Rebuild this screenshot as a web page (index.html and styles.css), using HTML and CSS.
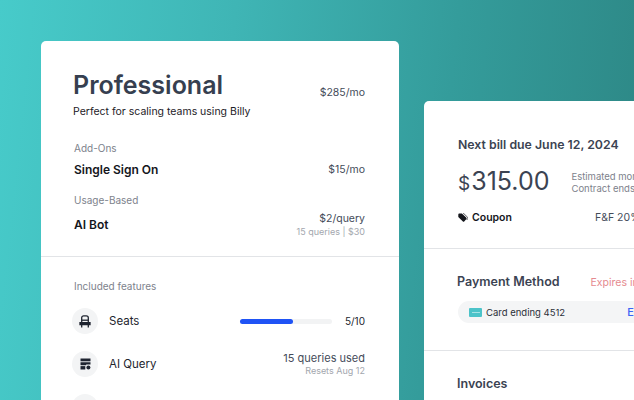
FILE: index.html
```html
<!DOCTYPE html>
<html lang="en">
<head>
  <meta charset="UTF-8">
  <meta name="viewport" content="width=device-width, initial-scale=1.0">
  <title>Billing</title>
  <link rel="stylesheet" href="styles.css">
</head>
<body>
  <div class="stage">
    <div class="card plan-card">
      <div class="plan-top">
        <div class="plan-head">
          <div>
            <h1>Professional</h1>
            <p class="tagline">Perfect for scaling teams using Billy</p>
          </div>
          <span class="price plan-price">$285/mo</span>
        </div>
        <p class="label addons-label">Add-Ons</p>
        <div class="line-row">
          <span class="item-name">Single Sign On</span>
          <span class="price">$15/mo</span>
        </div>
        <p class="label usage-label">Usage-Based</p>
        <div class="line-row usage-row">
          <span class="item-name">AI Bot</span>
          <div class="right-col">
            <span class="price">$2/query</span>
            <span class="small-note">15 queries | $30</span>
          </div>
        </div>
      </div>
      <div class="plan-features">
        <p class="label">Included features</p>
        <div class="feature">
          <span class="feature-icon">
            <svg width="12" height="13" viewBox="0 0 12 13" fill="none" stroke="#1f2430" stroke-width="1.3">
              <path d="M2.7 7V2.8A2 2 0 0 1 4.7.8h2.6a2 2 0 0 1 2 2V7"/>
              <path d="M2.7 5.2h6.6"/>
              <path d="M1 7.6h10v2H1z" fill="#1f2430"/>
              <path d="M2.7 9.6v3M9.3 9.6v3"/>
            </svg>
          </span>
          <span class="feature-name">Seats</span>
          <div class="seats-usage">
            <div class="bar"><div class="bar-fill" style="width: 58%"></div></div>
            <span class="seats-count">5/10</span>
          </div>
        </div>
        <div class="feature">
          <span class="feature-icon">
            <svg width="11" height="12" viewBox="0 0 11 12" fill="#1f2430">
              <path d="M.5.5h10v2.8H.5z"/>
              <path d="M.5 4.3h10v2.2H6.2v.7H.5z"/>
              <path d="M.5 8.1h4.8v3.4H.5z"/>
              <circle cx="8.4" cy="9.4" r="2"/>
            </svg>
          </span>
          <span class="feature-name">AI Query</span>
          <div class="right-col">
            <span class="price query-used">15 queries used</span>
            <span class="small-note">Resets Aug 12</span>
          </div>
        </div>
        <div class="feature">
          <span class="feature-icon"></span>
        </div>
      </div>
    </div>

    <div class="card bill-card">
      <div class="bill-section">
        <h2 class="next-bill">Next bill due June 12, 2024</h2>
        <div class="amount-row">
          <div class="amount"><span class="currency">$</span>315.00</div>
          <div class="amount-notes">
            <span>Estimated monthly total</span>
            <span>Contract ends Sep 12, 2025</span>
          </div>
        </div>
        <div class="coupon-row">
          <span class="coupon">
            <svg width="10" height="10" viewBox="0 0 10 10" fill="#14161c">
              <path d="M.3 1.4A.9.9 0 0 1 1.2.6h2.7l4.5 4.2a.9.9 0 0 1 0 1.3L6.2 8.4a.9.9 0 0 1-1.3 0L.3 3.9z"/>
              <path d="M5 .6h.8l3.9 3.8a1 1 0 0 1 0 1.4L8.6 7" fill="none" stroke="#14161c" stroke-width=".7"/>
            </svg>
            Coupon
          </span>
          <span class="coupon-code">F&amp;F 20% off</span>
        </div>
      </div>
      <div class="bill-section payment">
        <div class="payment-head">
          <h2>Payment Method</h2>
          <span class="expires">Expires in 30 days</span>
        </div>
        <div class="card-pill">
          <span class="card-chip"><span class="chip-text"></span></span>
          <span class="card-name">Card ending 4512</span>
          <span class="edit-link">Edit</span>
        </div>
      </div>
      <div class="bill-section invoices">
        <h2>Invoices</h2>
      </div>
    </div>
  </div>
</body>
</html>
```

FILE: styles.css
```css
* {
  box-sizing: border-box;
}
html, body {
  margin: 0;
  height: 400px;
  overflow: hidden;
}
body {
  font-family: Inter, "Liberation Sans", sans-serif;
  background: linear-gradient(96deg, #47cbca 0%, #3fb5b5 35%, #349c9b 68%, #2d8785 100%);
  color: #14161c;
}
h1, h2, p {
  margin: 0;
}
.stage {
  display: flex;
  align-items: flex-start;
  gap: 25px;
  width: 800px;
  padding: 41px 0 0 41px;
}
.card {
  background: #fff;
  border-radius: 5px;
  flex: none;
}
.plan-card {
  width: 358px;
  height: 420px;
}
.plan-top {
  padding: 29px 34px 0 32px;
  height: 216px;
  border-bottom: 1px solid #e2e4e7;
}
.plan-head {
  display: flex;
  justify-content: space-between;
  align-items: flex-start;
}
h1 {
  font-size: 25px;
  line-height: 30px;
  font-weight: 600;
  color: #363f50;
}
.tagline {
  font-size: 10.5px;
  line-height: 14px;
  margin-top: 5px;
  color: #1d2027;
}
.price {
  font-size: 10.5px;
  line-height: 14px;
  color: #444b59;
}
.plan-price {
  margin-top: 16px;
}
.label {
  font-size: 10px;
  line-height: 14px;
  color: #7d828c;
  padding-left: 1px;
}
.addons-label {
  margin-top: 22px;
}
.usage-label {
  margin-top: 15px;
}
.line-row {
  display: flex;
  justify-content: space-between;
  align-items: center;
  margin-top: 7px;
  padding-left: 1px;
}
.usage-row {
  margin-top: 5px;
}
.item-name {
  font-size: 12px;
  line-height: 16px;
  font-weight: 600;
}
.right-col {
  display: flex;
  flex-direction: column;
  align-items: flex-end;
}
.small-note {
  font-size: 9px;
  line-height: 12px;
  color: #a3a7ae;
}
.plan-features {
  padding: 22px 34px 0 31px;
}
.plan-features .label {
  padding-left: 2px;
}
.feature {
  display: flex;
  align-items: center;
  height: 26px;
  margin-top: 15px;
}
.feature + .feature {
  margin-top: 17px;
}
.feature-icon {
  display: flex;
  align-items: center;
  justify-content: center;
  width: 26px;
  height: 26px;
  border-radius: 50%;
  background: #f3f4f5;
  flex: none;
}
.feature-name {
  margin-left: 11px;
  font-size: 11.5px;
  color: #23262e;
}
.seats-usage {
  display: flex;
  align-items: center;
  margin-left: auto;
}
.bar {
  width: 92px;
  height: 5px;
  border-radius: 3px;
  background: #f2f3f4;
}
.bar-fill {
  height: 100%;
  border-radius: 3px;
  background: #1f53f5;
}
.seats-count {
  margin-left: 13px;
  font-size: 10px;
  color: #23262e;
}
.feature .right-col {
  margin-left: auto;
}
.query-used {
  font-size: 11px;
}
.bill-card {
  width: 300px;
  height: 320px;
  margin-top: 60px;
}
.bill-section {
  border-bottom: 1px solid #e2e4e7;
}
.bill-section:first-child {
  height: 148px;
  padding: 36px 0 0 34px;
}
h2 {
  font-size: 12.5px;
  line-height: 16px;
  font-weight: 600;
  color: #3b4352;
}
.next-bill {
  font-size: 12.3px;
}
.amount-row {
  display: flex;
  align-items: center;
  margin-top: 13px;
}
.amount {
  font-size: 25px;
  line-height: 30px;
  font-weight: 400;
  color: #3b4352;
}
.currency {
  font-size: 19px;
  margin-right: 1px;
}
.amount-notes {
  display: flex;
  flex-direction: column;
  margin-left: 22px;
  font-size: 9.5px;
  line-height: 12px;
  color: #7d828c;
  white-space: nowrap;
}
.coupon-row {
  display: flex;
  align-items: center;
  margin-top: 12px;
  font-size: 10.5px;
  line-height: 14px;
}
.coupon {
  display: flex;
  align-items: center;
  gap: 4px;
  width: 137px;
  font-weight: 600;
}
.coupon-code {
  color: #444b59;
  white-space: nowrap;
}
.payment {
  height: 102px;
  padding: 25px 0 0 33px;
}
.payment-head {
  display: flex;
  align-items: center;
}
.expires {
  margin-left: 31px;
  font-size: 10.5px;
  color: #e58a8f;
  white-space: nowrap;
}
.card-pill {
  display: flex;
  align-items: center;
  width: 300px;
  height: 22px;
  margin-top: 11px;
  margin-left: 1px;
  padding-left: 11px;
  border-radius: 11px;
  background: #f4f5f6;
}
.card-chip {
  display: flex;
  align-items: center;
  justify-content: center;
  width: 13px;
  height: 9px;
  background: #4cc3c9;
  border-radius: 1px;
}
.chip-text {
  width: 8px;
  height: 1px;
  background: #a6e3e6;
}
.card-name {
  margin-left: 4px;
  font-size: 9.5px;
  color: #2b2f38;
}
.edit-link {
  margin-left: 62px;
  font-size: 11px;
  font-weight: 500;
  color: #3a63f5;
}
.invoices {
  padding: 25px 0 0 33px;
  border-bottom: none;
}
```
